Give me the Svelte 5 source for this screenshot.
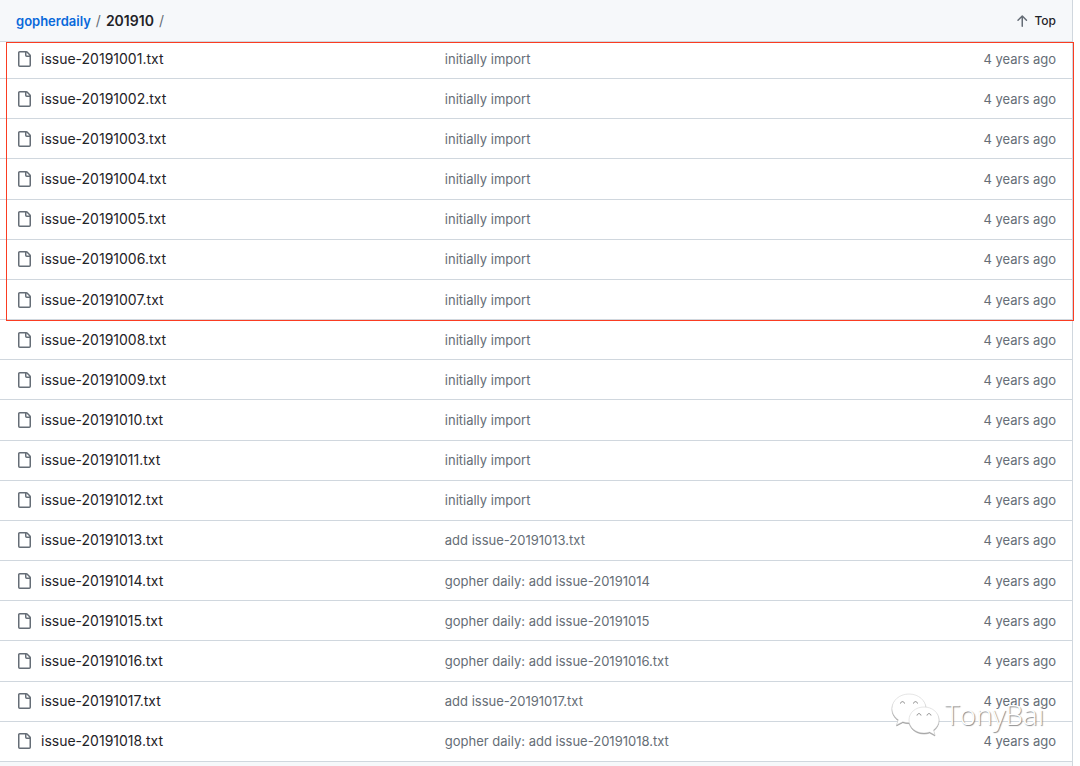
<script lang="ts">
  interface FileEntry {
    name: string;
    message: string;
    age: string;
  }

  const messages: Record<number, string> = {
    13: 'add issue-20191013.txt',
    14: 'gopher daily: add issue-20191014',
    15: 'gopher daily: add issue-20191015',
    16: 'gopher daily: add issue-20191016.txt',
    17: 'add issue-20191017.txt',
    18: 'gopher daily: add issue-20191018.txt',
  };

  const files: FileEntry[] = Array.from({ length: 18 }, (_, i) => ({
    name: `issue-201910${String(i + 1).padStart(2, '0')}.txt`,
    message: messages[i + 1] ?? 'initially import',
    age: '4 years ago',
  }));
</script>

<main class="browser">
  <header class="path-bar">
    <nav class="breadcrumb" aria-label="Breadcrumb">
      <a class="repo" href="#repo">gopherdaily</a>
      <span class="separator">/</span>
      <h1 class="folder">201910</h1>
      <span class="separator">/</span>
    </nav>
    <button class="top-button" type="button" onclick={() => window.scrollTo(0, 0)}>
      <svg class="arrow" viewBox="0 0 16 16" aria-hidden="true">
        <path d="M3.47 7.78a.75.75 0 0 1 0-1.06l4.25-4.25a.75.75 0 0 1 1.06 0l4.25 4.25a.751.751 0 0 1-1.06 1.06L9 4.81v8.44a.75.75 0 0 1-1.5 0V4.81L4.53 7.78a.75.75 0 0 1-1.06 0Z" />
      </svg>
      Top
    </button>
  </header>

  <table class="files" aria-label="Files">
    <tbody>
      {#each files as file}
        <tr>
          <td class="name">
            <div class="name-content">
              <svg class="file-icon" viewBox="0 0 16 16" aria-hidden="true">
                <path d="M2 1.75C2 .784 2.784 0 3.75 0h6.586c.464 0 .909.184 1.237.513l2.914 2.914c.329.328.513.773.513 1.237v9.586A1.75 1.75 0 0 1 13.25 16h-9.5A1.75 1.75 0 0 1 2 14.25Zm1.75-.25a.25.25 0 0 0-.25.25v12.5c0 .138.112.25.25.25h9.5a.25.25 0 0 0 .25-.25V6h-2.75A1.75 1.75 0 0 1 9 4.25V1.5Zm6.75.062V4.25c0 .138.112.25.25.25h2.688l-.011-.013-2.914-2.914-.013-.011Z" />
              </svg>
              <a href="#{file.name}">{file.name}</a>
            </div>
          </td>
          <td class="message"><a href="#{file.name}">{file.message}</a></td>
          <td class="age">{file.age}</td>
        </tr>
      {/each}
    </tbody>
  </table>

  <div class="highlight"></div>

  <div class="watermark">
    <svg class="chat" viewBox="0 0 50 44" aria-hidden="true">
      <path class="bubble" d="M18 2C8.500 2 1 8.500 1 16.500c0 4.700 2.500 8.500 6.300 11.200L5.500 33l6.300-3.200c2 .6 4 .9 6.200.9 9.500 0 17-6.200 17-14.200S27.500 2 18 2Z" />
      <path class="bubble" d="M33 15c-8.500 0-15 5.700-15 13s6.500 13 15 13c2 0 3.900-.3 5.600-.9L44 43l-1.500-5c3.400-2.400 5.500-6 5.500-10 0-7.300-6.500-13-15-13Z" />
      <path class="eyes" d="M9.500 11.500c.5-2.500 3.500-2.500 4 0M22.500 11.500c.5-2.500 3.500-2.500 4 0M26 23.500c.5-2.500 3.500-2.500 4 0M36 23.500c.5-2.500 3.500-2.500 4 0" />
    </svg>
    <span>TonyBai</span>
  </div>
</main>

<style>
  :global(body) {
    margin: 0;
    background: #fff;
  }

  .browser {
    position: relative;
    box-sizing: border-box;
    min-height: 100vh;
    margin-right: 7px;
    border-right: 1px solid #d0d7de;
    background: #f6f8fa;
    color: #1f2328;
    font-family: Inter, 'Noto Sans', sans-serif;
    font-size: 13px;
    line-height: 20px;
  }

  a {
    color: inherit;
    text-decoration: none;
  }

  a:hover {
    text-decoration: underline;
  }

  .path-bar {
    position: sticky;
    top: 0;
    z-index: 1;
    display: flex;
    align-items: center;
    justify-content: space-between;
    height: 41px;
    padding: 0 16px;
    border-bottom: 1px solid #d0d7de;
    background: #f6f8fa;
  }

  .breadcrumb {
    display: flex;
    align-items: center;
    gap: 5px;
  }

  .repo {
    color: #0969da;
    font-weight: 600;
  }

  .folder {
    margin: 0;
    font-size: 14px;
    font-weight: 600;
  }

  .separator {
    color: #656d76;
    font-size: 14px;
  }

  .top-button {
    display: flex;
    align-items: center;
    gap: 4px;
    padding: 0;
    border: 0;
    background: none;
    color: #1f2328;
    font: 500 12px/20px Inter, 'Noto Sans', sans-serif;
    cursor: pointer;
  }

  .arrow {
    width: 16px;
    height: 16px;
    fill: #656d76;
  }

  /* The first row slides slightly under the sticky bar. */
  .files {
    width: 100%;
    height: calc(100vh - 43px);
    margin-top: -3px;
    border-spacing: 0;
    table-layout: fixed;
    background: #fff;
  }

  td {
    height: 39px;
    padding: 0;
    border-bottom: 1px solid #d0d7de;
    color: #656d76;
    white-space: nowrap;
  }

  .name {
    width: 40%;
    padding-left: 16px;
    color: #1f2328;
    font-size: 14px;
  }

  .name-content {
    display: flex;
    align-items: center;
    gap: 9px;
  }

  .file-icon {
    width: 16px;
    height: 16px;
    fill: #656d76;
  }

  .age {
    width: 140px;
    padding-right: 16px;
    text-align: right;
  }

  .highlight {
    position: absolute;
    z-index: 2;
    top: 42px;
    left: 6px;
    right: -2px;
    height: 277px;
    border: 1px solid #fa3c22;
    pointer-events: none;
  }

  .watermark {
    position: absolute;
    right: 28px;
    bottom: 30px;
    display: flex;
    align-items: center;
    gap: 4px;
    color: #fff;
    font-family: 'Open Sans', 'Noto Sans', sans-serif;
    font-size: 28px;
    font-weight: 300;
    line-height: 44px;
    text-shadow: 1px 1px 1px #888;
    pointer-events: none;
  }

  .chat {
    width: 50px;
    height: 44px;
    filter: drop-shadow(0 1px 0 #999);
  }

  .bubble {
    fill: #fff;
    stroke: #ccc;
    stroke-width: 0.5;
  }

  .eyes {
    fill: none;
    stroke: #888;
  }
</style>
